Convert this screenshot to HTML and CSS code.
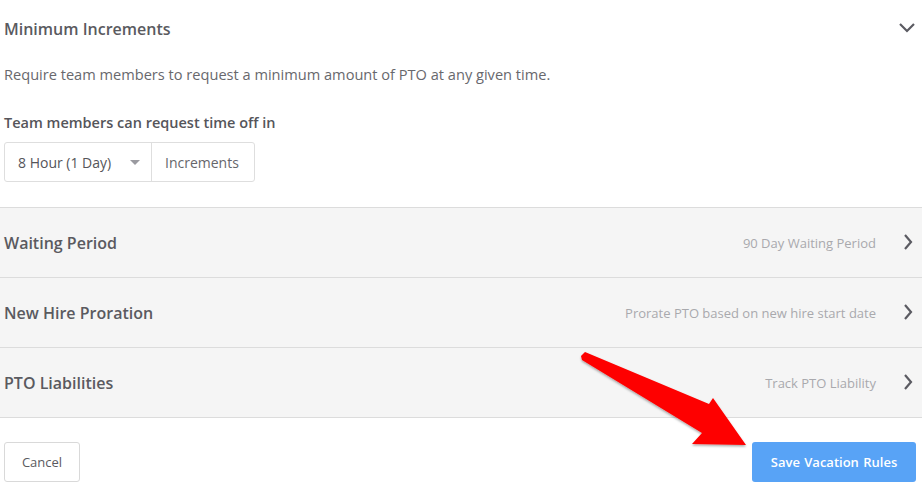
FILE: index.html
```html
<!DOCTYPE html>
<html>
<head>
<meta charset="utf-8">
<link rel="stylesheet" href="styles.css">
</head>
<body>
<div class="page">
  <section class="open-section">
    <div class="section-head">
      <h2 class="section-title">Minimum Increments</h2>
      <svg class="chev-down" width="18" height="12" viewBox="0 0 18 12"><path d="M2 3 L9 10 L16 3" fill="none" stroke="#5b5b62" stroke-width="2.2"/></svg>
    </div>
    <p class="desc">Require team members to request a minimum amount of PTO at any given time.</p>
    <div class="field-label">Team members can request time off in</div>
    <div class="select-group">
      <div class="select">
        <span>8 Hour (1 Day)</span>
        <span class="caret"></span>
      </div>
      <div class="addon">Increments</div>
    </div>
  </section>

  <div class="rows">
    <div class="row">
      <div class="row-title">Waiting Period</div>
      <div class="row-right"><span class="row-meta">90 Day Waiting Period</span>
        <svg class="chev-right" width="12" height="18" viewBox="0 0 12 18"><path d="M3 2 L9 9 L3 16" fill="none" stroke="#5b5b62" stroke-width="2.2"/></svg></div>
    </div>
    <div class="row">
      <div class="row-title">New Hire Proration</div>
      <div class="row-right"><span class="row-meta">Prorate PTO based on new hire start date</span>
        <svg class="chev-right" width="12" height="18" viewBox="0 0 12 18"><path d="M3 2 L9 9 L3 16" fill="none" stroke="#5b5b62" stroke-width="2.2"/></svg></div>
    </div>
    <div class="row">
      <div class="row-title">PTO Liabilities</div>
      <div class="row-right"><span class="row-meta">Track PTO Liability</span>
        <svg class="chev-right" width="12" height="18" viewBox="0 0 12 18"><path d="M3 2 L9 9 L3 16" fill="none" stroke="#5b5b62" stroke-width="2.2"/></svg></div>
    </div>
  </div>

  <div class="footer">
    <button class="btn btn-cancel">Cancel</button>
    <button class="btn btn-save">Save Vacation Rules</button>
  </div>

  <svg class="annot-arrow" width="922" height="494" viewBox="0 0 922 494">
    <defs>
      <filter id="sh" x="-10%" y="-10%" width="120%" height="120%">
        <feDropShadow dx="0" dy="1.5" stdDeviation="1.2" flood-color="#000" flood-opacity="0.35"/>
      </filter>
    </defs>
    <polygon filter="url(#sh)" fill="#fe0000" points="581,356 585,352 709,404 713,398 746,445 692,444 702,433 582,360"/>
  </svg>
</div>
</body>
</html>
```

FILE: styles.css
```css
* { box-sizing: border-box; }
html, body { margin: 0; padding: 0; background: #fff; }
body {
  font-family: "Open Sans", "Liberation Sans", sans-serif;
  color: #5a5a60;
  width: 922px;
  height: 494px;
  overflow: hidden;
}
.page { position: relative; width: 922px; height: 494px; }

.open-section { padding: 0 4px; height: 208px; border-bottom: 1px solid #dcdcdc; }
.section-head {
  display: flex; align-items: center; justify-content: space-between;
  height: 58px; padding-right: 2px;
}
.section-title { margin: 0; font-size: 16px; font-weight: 600; color: #5a5a60; }
.chev-down { margin-top: -4px; }
.desc { margin: 6px 0 0; font-size: 14.6px; color: #68686d; line-height: 20px; }
.field-label { margin-top: 29px; font-size: 14.5px; font-weight: 600; color: #55555a; line-height: 20px; }
.select-group {
  margin-top: 9px;
  display: inline-flex; height: 40px;
  border: 1px solid #dedede; border-radius: 3px;
  font-size: 14px; color: #55555a;
}
.select { width: 147px; display: flex; align-items: center; padding-left: 13px; border-right: 1px solid #dedede; }
.caret {
  margin-left: auto; margin-right: 11px;
  width: 0; height: 0;
  border-left: 5px solid transparent; border-right: 5px solid transparent;
  border-top: 5px solid #9a9aa0;
}
.addon { width: 102px; display: flex; align-items: center; padding-left: 13px; color: #66666b; }

.rows { background: #f5f5f5; }
.row {
  height: 70px; display: flex; align-items: center; justify-content: space-between;
  padding: 0 8px 0 4px; border-bottom: 1px solid #dcdcdc;
}
.row-title { font-size: 16px; font-weight: 600; color: #5a5a60; }
.row-right { display: flex; align-items: center; gap: 26px; }
.row-meta { font-size: 13px; color: #a9a9ad; }
.chev-right { margin-top: -2px; }

.footer { display: flex; justify-content: space-between; align-items: center; padding: 24px 6px 0 4px; }
.btn {
  height: 40px; border-radius: 3px; font-family: inherit; font-size: 13px; cursor: pointer;
}
.btn-cancel { width: 76px; background: #fff; border: 1px solid #d9d9d9; color: #5a5a60; }
.btn-save { width: 164px; background: #58a3f6; border: none; color: #fff; font-weight: 600; word-spacing: 1px; }

.annot-arrow { position: absolute; left: 0; top: 0; pointer-events: none; }
```
